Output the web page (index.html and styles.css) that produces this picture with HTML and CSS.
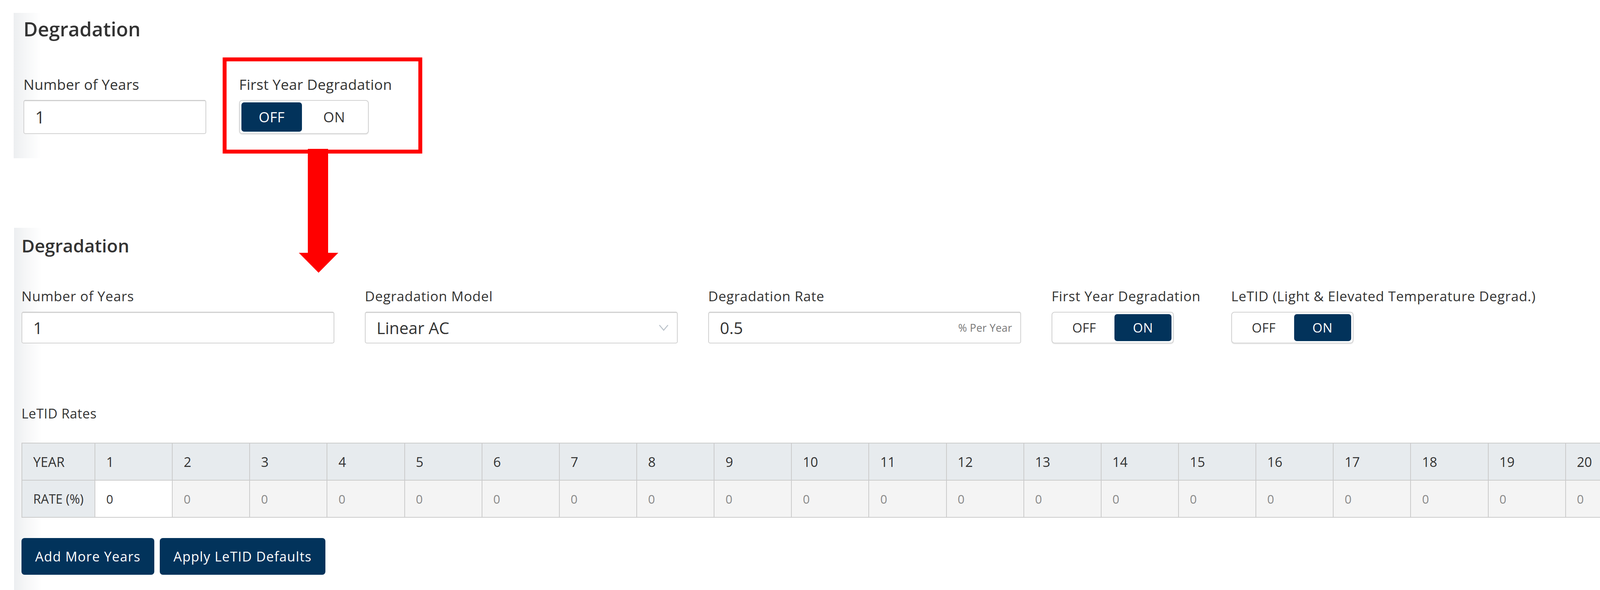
FILE: index.html
```html
<!DOCTYPE html>
<html lang="en">
<head>
<meta charset="utf-8">
<title>Degradation</title>
<link rel="stylesheet" href="styles.css">
</head>
<body>
<div class="canvas">
  <section class="panel panel-top">
    <h2 class="title title-top">Degradation</h2>
    <div class="row row-top">
      <div class="field">
        <label class="lbl lbl-top">Number of Years</label>
        <div class="input input-top">1</div>
      </div>
      <div class="field field-marked">
        <label class="lbl lbl-top">First Year Degradation</label>
        <div class="toggle toggle-top">
          <span class="seg seg-top active">OFF</span>
          <span class="seg seg-top">ON</span>
        </div>
      </div>
    </div>
  </section>

  <svg class="arrow" width="101" height="317" viewBox="0 0 101 317">
    <rect x="23" y="0" width="52" height="267" fill="#ff0000"/>
    <polygon points="0,266 101,266 50.5,317" fill="#ff0000"/>
  </svg>

  <section class="panel panel-bottom">
    <h2 class="title title-bottom">Degradation</h2>
    <div class="row row-bottom">
      <div class="field field-wide">
        <label class="lbl lbl-bottom">Number of Years</label>
        <div class="input input-bottom">1</div>
      </div>
      <div class="field field-wide">
        <label class="lbl lbl-bottom">Degradation Model</label>
        <div class="input input-bottom select">
          <span>Linear AC</span>
          <svg class="chev" width="26" height="17" viewBox="0 0 26 17"><polyline points="2,2 13,15 24,2" fill="none" stroke="#b9c1c9" stroke-width="2.5"/></svg>
        </div>
      </div>
      <div class="field field-wide">
        <label class="lbl lbl-bottom">Degradation Rate</label>
        <div class="input input-bottom select">
          <span>0.5</span>
          <span class="suffix">% Per Year</span>
        </div>
      </div>
      <div class="field">
        <label class="lbl lbl-bottom">First Year Degradation</label>
        <div class="toggle toggle-bottom">
          <span class="seg seg-bottom">OFF</span>
          <span class="seg seg-bottom active">ON</span>
        </div>
      </div>
      <div class="field">
        <label class="lbl lbl-bottom">LeTID (Light &amp; Elevated Temperature Degrad.)</label>
        <div class="toggle toggle-bottom">
          <span class="seg seg-bottom">OFF</span>
          <span class="seg seg-bottom active">ON</span>
        </div>
      </div>
    </div>

    <div class="rates-label">LeTID Rates</div>
    <table class="rates">
      <colgroup><col class="col-head"></colgroup>
      <tbody>
        <tr class="year-row">
          <th>YEAR</th>
          <td>1</td><td>2</td><td>3</td><td>4</td><td>5</td><td>6</td><td>7</td><td>8</td><td>9</td><td>10</td>
          <td>11</td><td>12</td><td>13</td><td>14</td><td>15</td><td>16</td><td>17</td><td>18</td><td>19</td><td>20</td>
        </tr>
        <tr class="rate-row">
          <th>RATE (%)</th>
          <td class="editable">0</td><td>0</td><td>0</td><td>0</td><td>0</td><td>0</td><td>0</td><td>0</td><td>0</td><td>0</td>
          <td>0</td><td>0</td><td>0</td><td>0</td><td>0</td><td>0</td><td>0</td><td>0</td><td>0</td><td>0</td>
        </tr>
      </tbody>
    </table>

    <div class="actions">
      <button class="btn">Add More Years</button>
      <button class="btn">Apply LeTID Defaults</button>
    </div>
  </section>
</div>
</body>
</html>
```

FILE: styles.css
```css
* { box-sizing: border-box; }

html, body {
  margin: 0;
  padding: 0;
  background: #ffffff;
}

body {
  font-family: "Open Sans", "Liberation Sans", sans-serif;
  color: #333333;
}

.canvas {
  position: relative;
  width: 4241px;
  height: 1510px;
  overflow: hidden;
}

.panel {
  background: linear-gradient(90deg, #eceef0 0px, #f5f6f7 28px, #ffffff 70px);
}

.panel-top {
  margin: 33px 0 0 35px;
  width: 1080px;
  height: 372px;
  padding: 16px 0 0 25px;
}

.panel-bottom {
  margin: 178px 0 0 36px;
  height: 927px;
  padding: 22px 0 0 19px;
}

.title {
  margin: 0;
  line-height: 1;
  font-weight: 600;
  color: #333333;
}

.title-top { font-size: 50px; }
.title-bottom { font-size: 46px; }

.row { display: flex; align-items: flex-start; }
.row-top { margin-top: 98px; gap: 84px; }
.row-bottom { margin-top: 89px; gap: 78px; }

.field { display: flex; flex-direction: column; position: relative; }
.field-wide { width: 801px; }

.lbl { display: block; line-height: 1; color: #333333; white-space: nowrap; }
.lbl-top { font-size: 37px; letter-spacing: 0.3px; margin-bottom: 22px; }
.lbl-bottom { font-size: 35px; letter-spacing: 0.8px; margin-bottom: 23px; }

.field-marked::after {
  content: "";
  position: absolute;
  top: -50px;
  left: -42px;
  width: 491px;
  height: 226px;
  border: 10px solid #ff0000;
  pointer-events: none;
}

.input {
  display: flex;
  align-items: center;
  justify-content: space-between;
  background: #ffffff;
  border: 2px solid #d2d2d2;
  border-top-color: #c4c4c4;
  border-radius: 5px;
  box-shadow: inset 0 2px 2px rgba(0, 0, 0, 0.06);
  color: #333333;
}

.input-top {
  width: 468px;
  height: 87px;
  padding: 0 28px;
  font-size: 43px;
}

.input-bottom {
  width: 801px;
  height: 81px;
  padding: 0 21px 0 28px;
  font-size: 42px;
}

.chev { display: block; }

.suffix {
  font-size: 27px;
  letter-spacing: 0.3px;
  color: #777777;
}

.toggle {
  display: flex;
  background: #ffffff;
  border: 2px solid #d2d2d2;
  border-radius: 8px;
  box-shadow: 0 2px 2px rgba(0, 0, 0, 0.08);
  padding: 4px;
}

.toggle-top { width: 332px; height: 87px; }
.toggle-bottom { width: 313px; height: 81px; }

.seg {
  flex: 1;
  display: flex;
  align-items: center;
  justify-content: center;
  border-radius: 7px;
  color: #333333;
}

.seg-top { font-size: 36px; letter-spacing: 0.5px; }
.seg-top.active { flex: 0 0 155px; }
.seg-bottom { font-size: 33px; letter-spacing: 0.5px; }
.seg-bottom.active { flex: 0 0 146px; }

.seg.active {
  background: #02335b;
  color: #ffffff;
}

.arrow {
  position: absolute;
  left: 765px;
  top: 381px;
}

.rates-label {
  margin-top: 162px;
  font-size: 34px;
  letter-spacing: 0.6px;
  line-height: 1;
  color: #333333;
}

.rates {
  margin-top: 58px;
  width: 4152px;
  border-collapse: collapse;
  table-layout: fixed;
}

.col-head { width: 187px; }

.rates th,
.rates td {
  height: 95px;
  border: 2px solid #cbcbcb;
  padding: 0 0 0 28px;
  text-align: left;
  font-weight: 400;
  white-space: nowrap;
}

.year-row th,
.year-row td {
  background: #e7ebee;
  font-size: 34px;
  color: #333333;
}

.rate-row th {
  background: #e7ebee;
  font-size: 32px;
  color: #333333;
}

.rate-row td {
  background: #f4f4f4;
  font-size: 31px;
  color: #8a8a8a;
}

.rate-row td.editable {
  background: #ffffff;
  color: #333333;
}

.actions {
  margin-top: 52px;
  display: flex;
  gap: 14px;
}

.btn {
  height: 94px;
  padding: 0 35px;
  border: none;
  border-radius: 8px;
  background: #02335b;
  color: #ffffff;
  font-family: "Open Sans", "Liberation Sans", sans-serif;
  font-size: 34px;
  letter-spacing: 1.3px;
}
```
